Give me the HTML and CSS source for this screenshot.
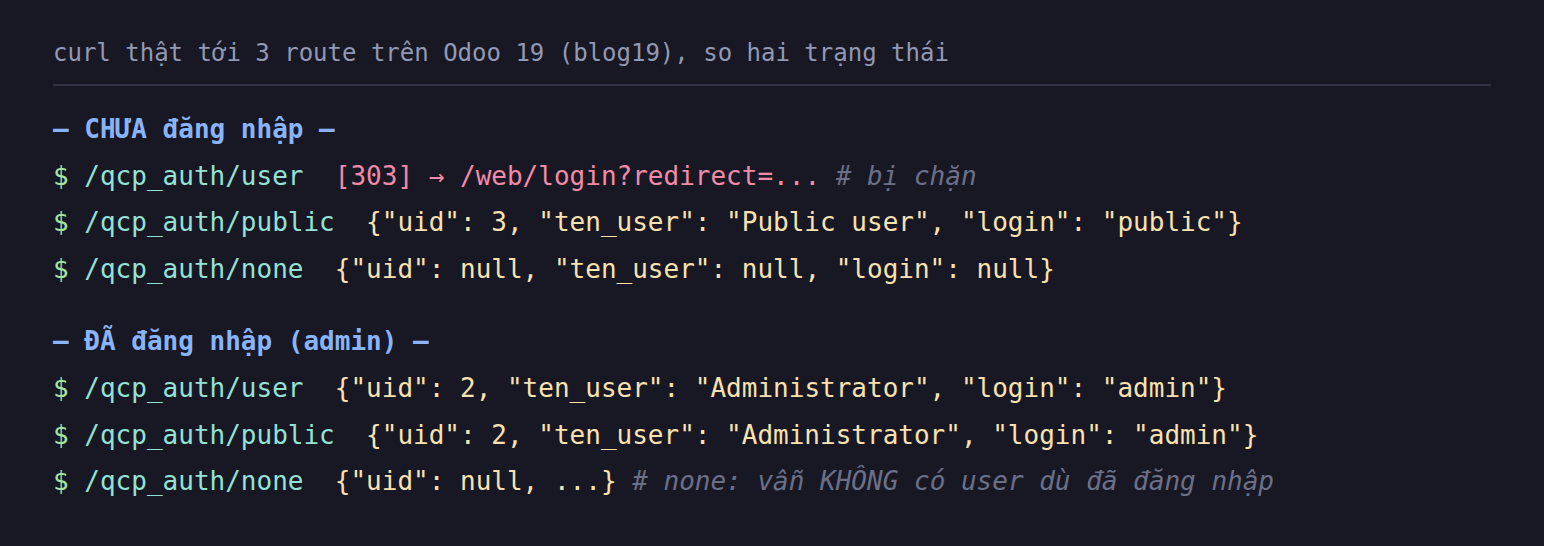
FILE: index.html
```html
<!DOCTYPE html>
<html lang="vi">
<head>
<meta charset="utf-8">
<link rel="stylesheet" href="styles.css">
</head>
<body>
<div class="term">
  <div class="title">curl thật tới 3 route trên Odoo 19 (blog19), so hai trạng thái</div>
  <div class="code">
    <div class="block">
      <div class="line head">— CHƯA đăng nhập —</div>
      <div class="line"><span class="p">$</span> <span class="r">/qcp_auth/user</span>  <span class="err">[303] → /web/login?redirect=...</span> <span class="c"># bị chặn</span></div>
      <div class="line"><span class="p">$</span> <span class="r">/qcp_auth/public</span>  <span class="j">{"uid": 3, "ten_user": "Public user", "login": "public"}</span></div>
      <div class="line"><span class="p">$</span> <span class="r">/qcp_auth/none</span>  <span class="j">{"uid": null, "ten_user": null, "login": null}</span></div>
    </div>
    <div class="block">
      <div class="line head">— ĐÃ đăng nhập (admin) —</div>
      <div class="line"><span class="p">$</span> <span class="r">/qcp_auth/user</span>  <span class="j">{"uid": 2, "ten_user": "Administrator", "login": "admin"}</span></div>
      <div class="line"><span class="p">$</span> <span class="r">/qcp_auth/public</span>  <span class="j">{"uid": 2, "ten_user": "Administrator", "login": "admin"}</span></div>
      <div class="line"><span class="p">$</span> <span class="r">/qcp_auth/none</span>  <span class="j">{"uid": null, ...}</span> <span class="c"># none: v<span class="sk">ẫ</span>n KHÔNG có user dù đã đăng nhập</span></div>
    </div>
  </div>
</div>
</body>
</html>
```
FILE: styles.css
```css
html, body {
  margin: 0;
  padding: 0;
  background: #181825;
}
.term {
  padding: 35px 53px 0 53px;
  font-family: "DejaVu Sans Mono", monospace;
}
.title {
  font-size: 24px;
  line-height: 36px;
  color: #9399b2;
  padding-bottom: 13px;
  border-bottom: 2px solid #313244;
  white-space: pre;
}
.code {
  margin-top: 20px;
  display: flex;
  flex-direction: column;
  gap: 26px;
}
.line {
  font-size: 26px;
  line-height: 46.6px;
  white-space: pre;
}
.head {
  color: #89b4fa;
  font-weight: bold;
}
.p { color: #a6e3a1; }
.r { color: #94e2d5; }
.err { color: #f38ba8; }
.j { color: #f9e2af; }
.c { color: #6c7086; font-style: italic; }
.sk {
  display: inline-block;
  font-style: normal;
  transform: skewX(-11deg);
}
```
